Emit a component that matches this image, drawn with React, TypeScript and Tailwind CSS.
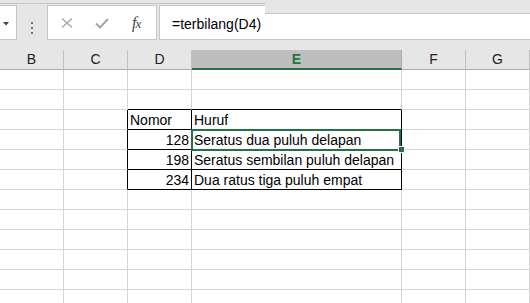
import React from 'react';

const columns = [
  { label: 'B', width: 'w-[64px]' },
  { label: 'C', width: 'w-[64px]' },
  { label: 'D', width: 'w-[64px]' },
  { label: 'E', width: 'w-[210px]' },
  { label: 'F', width: 'w-[64px]' },
  { label: 'G', width: 'w-[64px]' },
  { label: '', width: 'w-[20px]' },
];

const cells: Record<string, { text: string; align?: 'right' }> = {
  D3: { text: 'Nomor' },
  E3: { text: 'Huruf' },
  D4: { text: '128', align: 'right' },
  E4: { text: 'Seratus dua puluh delapan' },
  D5: { text: '198', align: 'right' },
  E5: { text: 'Seratus sembilan puluh delapan' },
  D6: { text: '234', align: 'right' },
  E6: { text: 'Dua ratus tiga puluh empat' },
};

const rows = Array.from({ length: 12 }, (_, i) => i + 1);

const inTable = (col: string, row: number) => (col === 'D' || col === 'E') && row >= 3 && row <= 6;

const Cell: React.FC<{ col: string; row: number; width: string }> = ({ col, row, width }) => {
  const key = `${col}${row}`;
  const cell = cells[key];
  const blackRight = inTable(col, row) || (col === 'C' && row >= 3 && row <= 6);
  const blackBottom = (col === 'D' || col === 'E') && row >= 2 && row <= 6;
  const selected = key === 'E4';

  return (
    <div
      className={`relative ${width} shrink-0 h-[20px] border-r border-b flex items-end ${
        blackRight ? 'border-r-black' : 'border-r-[#d4d4d4]'
      } ${blackBottom ? 'border-b-black' : 'border-b-[#d4d4d4]'} ${
        cell?.align === 'right' ? 'justify-end pr-[2px]' : 'pl-[2px]'
      }`}
    >
      {cell && <span className="text-[14px] leading-[17px] text-black whitespace-nowrap">{cell.text}</span>}
      {selected && (
        <>
          <div className="absolute -left-px -top-px w-[210px] h-[22px] border-2 border-[#217346] z-10" />
          <div className="absolute left-[206px] top-[16px] w-[7px] h-[7px] bg-[#217346] border border-white z-20" />
        </>
      )}
    </div>
  );
};

export default function App() {
  return (
    <div className="w-[530px] h-[303px] overflow-hidden bg-white font-['Liberation_Sans',sans-serif] select-none">
      {/* formula bar */}
      <div className="h-[50px] bg-[#e6e6e6]">
        <div className="h-[4px] border-b border-[#c6c6c6]" />
        <div className="relative flex items-start pt-px">
          <div className="w-[17px] h-[35px] bg-white border border-l-0 border-[#c6c6c6] flex items-center">
            <svg width="6" height="4" viewBox="0 0 6 4" className="ml-[3px] mt-[2px]">
              <path d="M0 0h6L3 3.5z" fill="#444" />
            </svg>
          </div>
          <div className="ml-[14px] w-[2px] flex flex-col gap-[2px] pt-[17px]">
            <div className="h-[2px] bg-[#707070]" />
            <div className="h-[2px] mt-[1px] bg-[#707070]" />
            <div className="h-[2px] mt-px bg-[#707070]" />
          </div>
          <div className="ml-[14px] w-[110px] h-[35px] bg-white border border-[#c6c6c6] flex items-center">
            <svg width="12" height="10" viewBox="0 0 12 10" className="ml-[13px]">
              <path d="M1 0.5L11 9.5M11 0.5L1 9.5" stroke="#a6a6a6" strokeWidth="1.4" />
            </svg>
            <svg width="14" height="11" viewBox="0 0 14 11" className="ml-[22px] mt-[1px]">
              <path d="M1 5.5L5 9.5L13 1" stroke="#a6a6a6" strokeWidth="2" fill="none" />
            </svg>
            <span className="ml-[23px] font-['Liberation_Serif',serif] italic text-[16px] leading-none text-[#444] tracking-[-1px]">
              f<span className="text-[13px]">x</span>
            </span>
          </div>
          <div className="ml-[2px] flex-1 h-[35px] bg-white border border-r-0 border-[#c6c6c6] flex items-center pl-[12px] pt-[3px]">
            <span className="text-[14px] text-black">=terbilang(D4)</span>
          </div>
          <div className="absolute left-[265px] right-0 -top-px h-[11px] bg-[#e6e6e6] border-b border-[#c6c6c6]" />
        </div>
      </div>

      {/* column headers */}
      <div className="flex h-[20px] bg-[#e6e6e6]">
        {columns.map((c, i) =>
          c.label === 'E' ? (
            <div
              key={i}
              className={`${c.width} shrink-0 bg-[#bebebe] border-r border-r-[#ababab] border-b-2 border-b-[#217346] flex items-center justify-center text-[14px] font-bold text-[#217346]`}
            >
              {c.label}
            </div>
          ) : (
            <div
              key={i}
              className={`${c.width} shrink-0 border-r border-r-[#c0c0c0] border-b border-b-[#ababab] flex items-center justify-center text-[14px] text-[#222]`}
            >
              {c.label}
            </div>
          )
        )}
      </div>

      {/* grid */}
      <div className="flex flex-col">
        {rows.map((r) => (
          <div key={r} className="flex">
            {columns.map((c, i) => (
              <Cell key={i} col={c.label || 'H'} row={r} width={c.width} />
            ))}
          </div>
        ))}
      </div>
    </div>
  );
}
